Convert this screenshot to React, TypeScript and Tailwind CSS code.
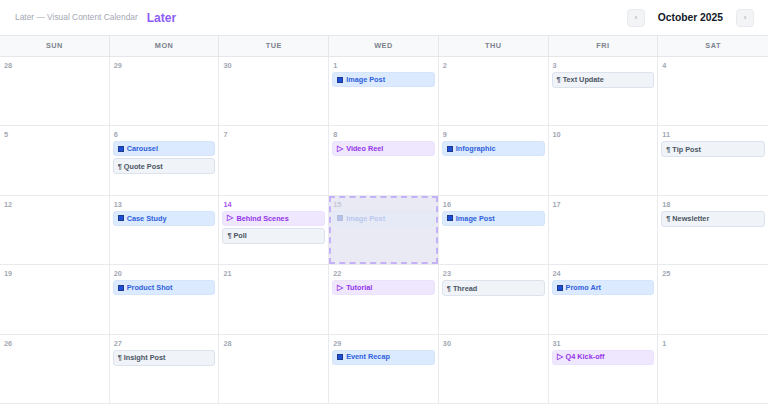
import React from "react";

type Ev = { t: "img" | "txt" | "vid"; label: string };
type Day = { n: number; muted?: boolean; today?: boolean; ghost?: boolean; ev: Ev[] };

const I = (label: string): Ev => ({ t: "img", label });
const T = (label: string): Ev => ({ t: "txt", label });
const V = (label: string): Ev => ({ t: "vid", label });

const days: Day[] = [
  { n: 28, muted: true, ev: [] },
  { n: 29, muted: true, ev: [] },
  { n: 30, muted: true, ev: [] },
  { n: 1, ev: [I("Image Post")] },
  { n: 2, ev: [] },
  { n: 3, ev: [T("Text Update")] },
  { n: 4, ev: [] },
  { n: 5, ev: [] },
  { n: 6, ev: [I("Carousel"), T("Quote Post")] },
  { n: 7, ev: [] },
  { n: 8, ev: [V("Video Reel")] },
  { n: 9, ev: [I("Infographic")] },
  { n: 10, ev: [] },
  { n: 11, ev: [T("Tip Post")] },
  { n: 12, ev: [] },
  { n: 13, ev: [I("Case Study")] },
  { n: 14, today: true, ev: [V("Behind Scenes"), T("Poll")] },
  { n: 15, ghost: true, ev: [I("Image Post")] },
  { n: 16, ev: [I("Image Post")] },
  { n: 17, ev: [] },
  { n: 18, ev: [T("Newsletter")] },
  { n: 19, ev: [] },
  { n: 20, ev: [I("Product Shot")] },
  { n: 21, ev: [] },
  { n: 22, ev: [V("Tutorial")] },
  { n: 23, ev: [T("Thread")] },
  { n: 24, ev: [I("Promo Art")] },
  { n: 25, ev: [] },
  { n: 26, muted: true, ev: [] },
  { n: 27, ev: [T("Insight Post")] },
  { n: 28, ev: [] },
  { n: 29, ev: [I("Event Recap")] },
  { n: 30, ev: [] },
  { n: 31, ev: [V("Q4 Kick-off")] },
  { n: 1, muted: true, ev: [] },
];

function EventChip({ e }: { e: Ev }) {
  if (e.t === "img")
    return (
      <div className="h-[15px] rounded-[3px] border border-[#d4e4fb] bg-[#dbeafe] px-[4px] flex items-center gap-[3px] text-[7.3px] font-bold text-[#2f5fdc] leading-none whitespace-nowrap overflow-hidden">
        <span className="inline-block w-[6px] h-[6px] bg-[#1d4ed8] border border-[#1e3a8a]" />
        <span>{e.label}</span>
      </div>
    );
  if (e.t === "vid")
    return (
      <div className="h-[15px] rounded-[3px] border border-[#ebe2fd] bg-[#efe7fe] px-[4px] flex items-center gap-[3px] text-[7.3px] font-bold text-[#9333ea] leading-none whitespace-nowrap overflow-hidden">
        <span className="text-[8px]">▷</span>
        <span>{e.label}</span>
      </div>
    );
  return (
    <div className="h-[16px] rounded-[3px] border border-[#dde3ec] bg-[#f0f3f8] px-[4px] flex items-center gap-[2px] text-[7.3px] font-bold text-[#4b5563] leading-none whitespace-nowrap overflow-hidden">
      <span>¶</span>
      <span>{e.label}</span>
    </div>
  );
}

export default function App() {
  return (
    <div
      className="w-[768px] h-[404px] bg-white flex flex-col overflow-hidden"
      style={{ fontFamily: '"Liberation Sans", Arial, sans-serif' }}
    >
      <div className="h-[35px] flex items-center justify-between pl-[15px] pr-[14px] shrink-0">
        <div className="flex items-center gap-[9px]">
          <span className="text-[8.4px] text-[#a3a8b3]">Later — Visual Content Calendar</span>
          <span className="text-[12px] font-bold text-[#8b5cf6]">Later</span>
        </div>
        <div className="flex items-center gap-[13px]">
          <button className="w-[18px] h-[18px] rounded-[4px] bg-[#f3f4f6] border border-[#e8eaee] flex items-center justify-center text-[8px] text-[#9ca3af] leading-none">
            ‹
          </button>
          <span className="text-[10.3px] font-bold text-[#111827]">October 2025</span>
          <button className="w-[18px] h-[18px] rounded-[4px] bg-[#f3f4f6] border border-[#e8eaee] flex items-center justify-center text-[8px] text-[#9ca3af] leading-none">
            ›
          </button>
        </div>
      </div>
      <div className="grid grid-cols-7 h-[22px] bg-[#f8f9fb] border-t border-b border-[#e5e7eb] shrink-0">
        {["SUN", "MON", "TUE", "WED", "THU", "FRI", "SAT"].map((d, i) => (
          <div
            key={d}
            className={`flex items-center justify-center text-[7.3px] font-bold tracking-[0.5px] text-[#7b818c] ${i < 6 ? "border-r border-[#e5e7eb]" : ""}`}
          >
            {d}
          </div>
        ))}
      </div>
      <div className="grid grid-cols-7 grid-rows-5 flex-1">
        {days.map((d, i) => (
          <div
            key={i}
            className={`relative border-b border-[#e8eaee] ${i % 7 < 6 ? "border-r" : ""} ${d.ghost ? "bg-[#eaeaf4]" : "bg-white"} px-[3px] pt-[4px] flex flex-col`}
          >
            {d.ghost && (
              <div className="absolute inset-0 border-[2px] border-dashed border-[#c4b1f7] pointer-events-none" />
            )}
            <div
              className={`text-[7.3px] font-bold leading-[10px] h-[10px] pl-[1px] ${d.today ? "text-[#a855f7]" : d.ghost ? "text-[#c6c8d6]" : "text-[#a3a8b3]"}`}
            >
              {d.n}
            </div>
            <div className={`flex flex-col gap-[2px] mt-[1px] ${d.ghost ? "opacity-25" : ""}`}>
              {d.ev.map((e, j) => (
                <EventChip key={j} e={e} />
              ))}
            </div>
          </div>
        ))}
      </div>
    </div>
  );
}
